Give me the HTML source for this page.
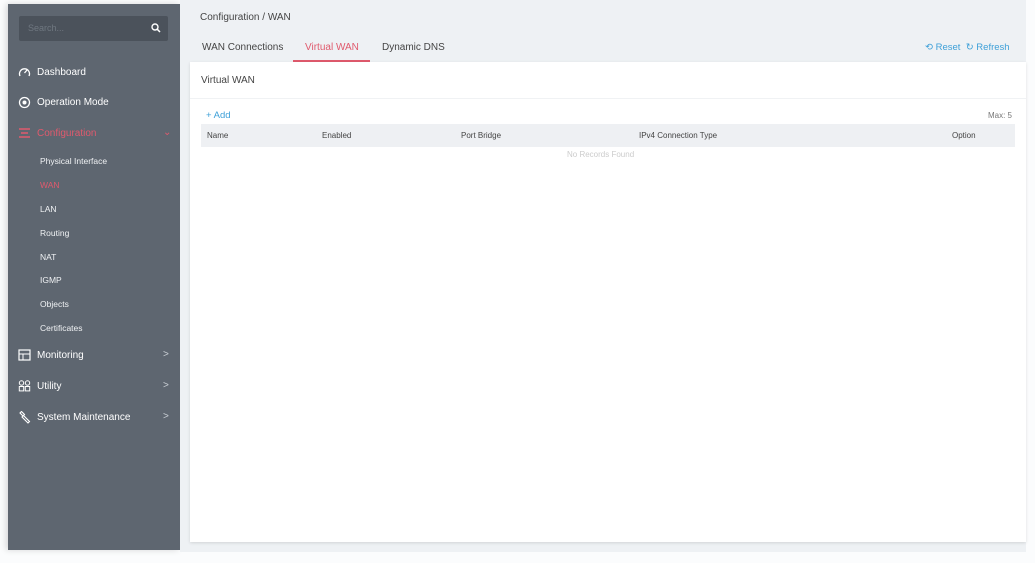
<!DOCTYPE html>
<html><head><meta charset="utf-8"><style>
*{margin:0;padding:0;box-sizing:border-box}
body{width:1035px;height:563px;background:#fbfcfd;font-family:"Liberation Sans",sans-serif;position:relative;overflow:hidden}
.sb{position:absolute;left:8px;top:4px;width:172px;height:546px;background:#5e6670;box-shadow:-2px 0 6px rgba(0,0,0,.15)}
.search{position:absolute;left:11px;top:12px;width:149px;height:25px;background:#4b525b;border-radius:2px;color:#6f7780;font-size:9px;padding:7px 9px}
.search svg{position:absolute;right:7px;top:7px}
.it{position:absolute;left:10px;color:#fff;font-size:10px;display:flex;align-items:center}
.it svg{margin-right:6px}
.sub{position:absolute;left:32px;color:#f0f2f4;font-size:8.5px}
.arr{position:absolute;left:155px;color:#c9ced4;font-size:10px}
.main{position:absolute;left:180px;top:0;width:846px;height:552px;background:#eef1f4}
.bc{position:absolute;left:20px;top:12px;font-size:10px;color:#444}
.tab{position:absolute;top:42px;font-size:10px;color:#444}
.card{position:absolute;left:10px;top:62px;width:836px;height:480px;background:#fff;box-shadow:0 1px 3px rgba(0,0,0,.12)}
.th{position:absolute;font-size:8px;color:#444;top:131px}
</style></head><body>
<div class="sb">
<div class="search">Search...<svg width="10" height="10" viewBox="0 0 10 10"><circle cx="4" cy="4" r="3" fill="none" stroke="#fff" stroke-width="1.4"/><path d="M6.3 6.3L9 9" stroke="#fff" stroke-width="1.5"/></svg></div>
<div class="it" style="top:62px"><svg width="13" height="12" viewBox="0 0 13 12"><path d="M2 10A5 5 0 1 1 11 10" fill="none" stroke="#fff" stroke-width="1.3"/><path d="M6.5 7L9 4" stroke="#fff" stroke-width="1.3"/></svg>Dashboard</div>
<div class="it" style="top:92px"><svg width="13" height="13" viewBox="0 0 13 13"><circle cx="6.5" cy="6.5" r="5" fill="none" stroke="#fff" stroke-width="1.3"/><circle cx="6.5" cy="6.5" r="2" fill="#fff"/></svg>Operation Mode</div>
<div class="it" style="top:123px;color:#e05a6d"><svg width="13" height="12" viewBox="0 0 13 12"><path d="M1 2h11M3 6h7M1 10h11" stroke="#e05a6d" stroke-width="1.4"/></svg>Configuration</div>
<div class="arr" style="top:123px;color:#e05a6d">⌄</div>
<div class="sub" style="top:152px">Physical Interface</div>
<div class="sub" style="top:176px;color:#e05a6d">WAN</div>
<div class="sub" style="top:200px">LAN</div>
<div class="sub" style="top:224px">Routing</div>
<div class="sub" style="top:248px">NAT</div>
<div class="sub" style="top:271px">IGMP</div>
<div class="sub" style="top:295px">Objects</div>
<div class="sub" style="top:319px">Certificates</div>
<div class="it" style="top:345px"><svg width="13" height="12" viewBox="0 0 13 12"><rect x="1" y="1" width="11" height="10" fill="none" stroke="#fff" stroke-width="1.2"/><path d="M1 5h11M5 5v6" stroke="#fff"/></svg>Monitoring</div>
<div class="arr" style="top:345px">&gt;</div>
<div class="it" style="top:376px"><svg width="13" height="12" viewBox="0 0 13 12"><circle cx="3.5" cy="3" r="2.2" fill="none" stroke="#fff"/><circle cx="9.5" cy="3" r="2.2" fill="none" stroke="#fff"/><rect x="1.3" y="6.5" width="4.4" height="4.4" fill="none" stroke="#fff"/><rect x="7.3" y="6.5" width="4.4" height="4.4" fill="none" stroke="#fff"/></svg>Utility</div>
<div class="arr" style="top:376px">&gt;</div>
<div class="it" style="top:407px"><svg width="13" height="13" viewBox="0 0 13 13"><path d="M2 2l3 3-1 1 6 6 1.5-1.5-6-6 1-1-3-3z" fill="none" stroke="#fff" stroke-width="1.1"/></svg>System Maintenance</div>
<div class="arr" style="top:407px">&gt;</div>
</div>
<div class="main">
<div class="bc">Configuration / WAN</div>
<div class="tab" style="left:22px">WAN Connections</div>
<div class="tab" style="left:125px;color:#e05a6d">Virtual WAN</div>
<div style="position:absolute;left:113px;top:60px;width:77px;height:2px;background:#e05a6d"></div>
<div class="tab" style="left:202px">Dynamic DNS</div>
<div style="position:absolute;left:745px;top:42px;font-size:9.5px;color:#3ea0d8">⟲ Reset &nbsp;↻ Refresh</div>
<div class="card">
<div style="position:absolute;left:11px;top:13px;font-size:10px;color:#444">Virtual WAN</div>
<div style="position:absolute;left:0;top:36px;width:836px;height:1px;background:#f0f2f4"></div>
<div style="position:absolute;left:16px;top:48px;font-size:9.5px;color:#3ea0d8">+ Add</div>
<div style="position:absolute;right:14px;top:49px;font-size:8px;color:#777">Max: 5</div>
<div style="position:absolute;left:11px;top:62px;width:814px;height:23px;background:#eef0f3"></div>
<div style="position:absolute;left:377px;top:88px;font-size:8px;color:#ccc">No Records Found</div>
</div>
</div>
<div class="th" style="left:207px">Name</div>
<div class="th" style="left:322px">Enabled</div>
<div class="th" style="left:461px">Port Bridge</div>
<div class="th" style="left:639px">IPv4 Connection Type</div>
<div class="th" style="left:952px">Option</div>
</body></html>
